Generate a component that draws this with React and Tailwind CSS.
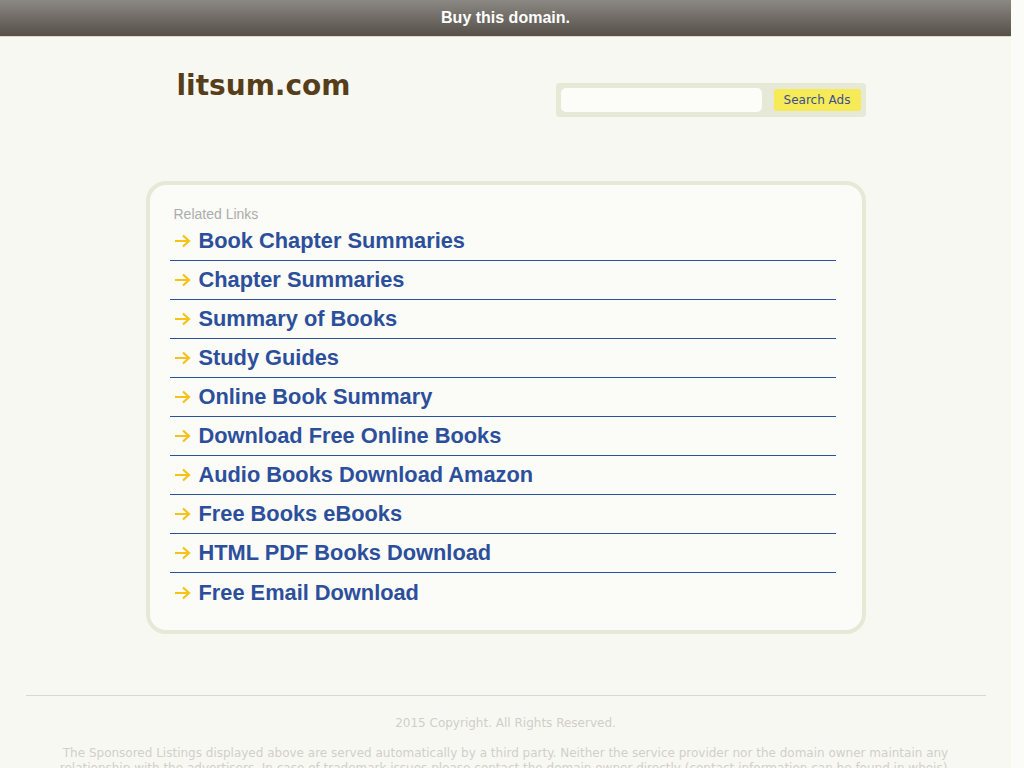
import React from "react";

const links = [
  "Book Chapter Summaries",
  "Chapter Summaries",
  "Summary of Books",
  "Study Guides",
  "Online Book Summary",
  "Download Free Online Books",
  "Audio Books Download Amazon",
  "Free Books eBooks",
  "HTML PDF Books Download",
  "Free Email Download",
];

function Arrow() {
  return (
    <svg width="17" height="14" viewBox="0 0 17 14" className="shrink-0">
      <path d="M1 7 H15 M9 1.5 L15 7 L9 12.5" fill="none" stroke="#f5c21b" strokeWidth="2.2" strokeLinecap="butt" strokeLinejoin="miter" />
    </svg>
  );
}

export default function App() {
  return (
    <div className="flex min-h-[768px] bg-[#fafaf6]">
      <div className="w-[1011px] shrink-0 bg-[#f8f8f3] overflow-hidden h-[768px]">
        <div className="h-[37px] bg-gradient-to-b from-[#8c8883] to-[#55504a] border-b border-[#d9d9d2] flex items-center justify-center">
          <span className="text-white font-bold text-[16px] leading-none font-['Liberation_Sans',Arial,sans-serif]">Buy this domain.</span>
        </div>
        <div className="w-[720px] mx-auto">
          <div className="flex justify-between items-start pt-[30px]">
            <div className="ml-[31px] mt-[2px] text-[28px] leading-[34px] font-bold text-[#573e1a] font-['DejaVu_Sans',sans-serif]">litsum.com</div>
            <div className="mt-[16px] w-[310px] h-[34px] bg-[#e6e9d6] rounded-[4px] flex items-center pl-[5px] pr-[5px]">
              <div className="w-[201px] h-[24px] bg-[#fcfdf8] rounded-[5px]" />
              <div className="ml-[12px] w-[87px] h-[22px] bg-[#f6ea57] rounded-[3px] flex items-center justify-center text-[12px] text-[#3a4f93] font-['DejaVu_Sans',sans-serif]">Search Ads</div>
            </div>
          </div>
          <div className="mt-[64px] h-[453px] border-[4px] border-[#e6e9d6] rounded-[20px] bg-[#fbfbf7] pt-[21px] pl-[20px] pr-[26px] pb-[19px]">
            <div className="pl-[4px] text-[14px] leading-[16px] text-[#acacac] font-['Liberation_Sans',Arial,sans-serif]">Related Links</div>
            <ul>
              {links.map((l, i) => (
                <li
                  key={l}
                  className={
                    "h-[39px] flex items-center gap-[8px] pl-[4px] " +
                    (i < links.length - 1 ? "border-b border-[#2d519d]" : "")
                  }
                >
                  <Arrow />
                  <span className="text-[21.8px] font-bold text-[#2c4f9c] font-['Liberation_Sans',Arial,sans-serif] leading-none">{l}</span>
                </li>
              ))}
            </ul>
          </div>
        </div>
        <div className="mt-[61px] mx-auto w-[960px] border-t border-[#d8d8d1]" />
        <div className="mt-[20px] text-center text-[12px] leading-[15px] text-[#cfcfc8] font-['DejaVu_Sans',sans-serif]">2015 Copyright. All Rights Reserved.</div>
        <p className="mt-[15px] mx-auto w-[900px] text-center text-[12px] leading-[15px] text-[#d0d0c9] font-['DejaVu_Sans',sans-serif]">
          The Sponsored Listings displayed above are served automatically by a third party. Neither the service provider nor the domain owner maintain any relationship with the advertisers. In case of trademark issues please contact the domain owner directly (contact information can be found in whois).
        </p>
      </div>
      <div className="flex-1 bg-[#fbfbf8]" />
    </div>
  );
}
